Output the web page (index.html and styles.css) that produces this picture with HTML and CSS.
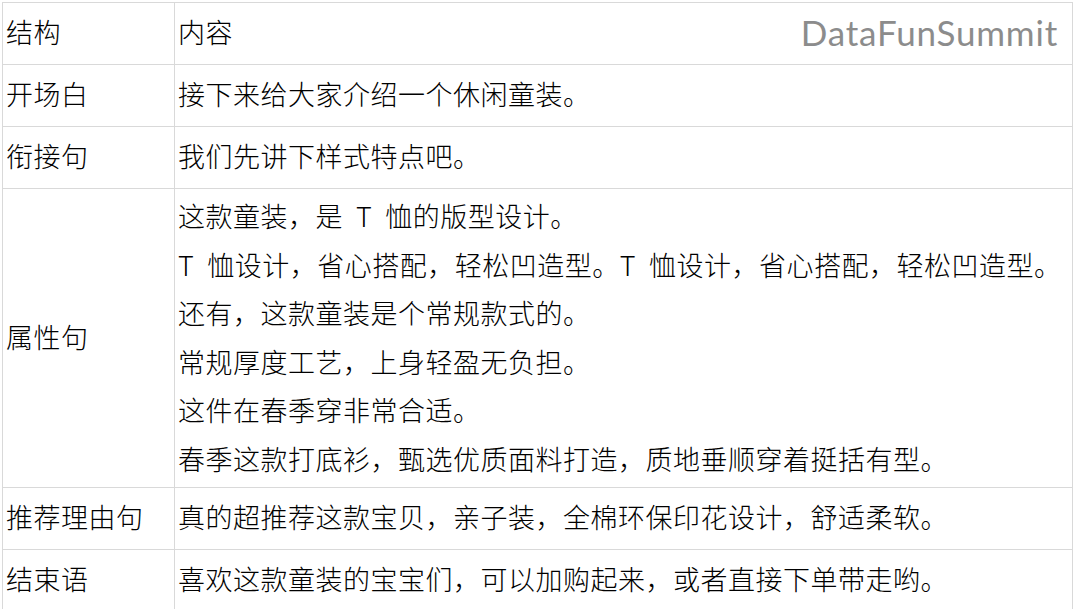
FILE: index.html
```html
<!DOCTYPE html>
<html lang="zh">
<head>
    <meta charset="UTF-8">
    <title>结构</title>
    <link rel="stylesheet" href="styles.css">
</head>
<body>
    <div class="sheet">
        <table class="grid">
            <tr>
                <td class="col-name">结构</td>
                <td>内容</td>
            </tr>
            <tr>
                <td class="col-name">开场白</td>
                <td>接下来给大家介绍一个休闲童装。</td>
            </tr>
            <tr>
                <td class="col-name">衔接句</td>
                <td>我们先讲下样式特点吧。</td>
            </tr>
            <tr>
                <td class="col-name">属性句</td>
                <td class="multi">
                    这款童装，是&nbsp; T&nbsp; 恤的版型设计。<br>
                    T&nbsp; 恤设计，省心搭配，轻松凹造型。T&nbsp; 恤设计，省心搭配，轻松凹造型。<br>
                    还有，这款童装是个常规款式的。<br>
                    常规厚度工艺，上身轻盈无负担。<br>
                    这件在春季穿非常合适。<br>
                    春季这款打底衫，甄选优质面料打造，质地垂顺穿着挺括有型。
                </td>
            </tr>
            <tr>
                <td class="col-name">推荐理由句</td>
                <td>真的超推荐这款宝贝，亲子装，全棉环保印花设计，舒适柔软。</td>
            </tr>
            <tr>
                <td class="col-name">结束语</td>
                <td>喜欢这款童装的宝宝们，可以加购起来，或者直接下单带走哟。</td>
            </tr>
        </table>
        <div class="watermark">DataFunSummit</div>
    </div>
</body>
</html>
```

FILE: styles.css
```css
body {
    margin: 0;
    background: #fff;
    font-family: 'Noto Sans CJK SC', 'Noto Sans', sans-serif;
    color: #000;
    overflow: hidden;
}
.sheet {
    position: relative;
    padding: 2px 0 0 2px;
}
.grid {
    border-collapse: collapse;
    width: 1071px;
    font-size: 27px;
    letter-spacing: 0.5px;
    font-weight: 300;
}
.grid td {
    border: 1px solid #d9d9d9;
    height: 58px;
    padding: 0 3px 3px;
    line-height: 34px;
    vertical-align: middle;
    white-space: nowrap;
}
.grid .col-name {
    width: 165px;
}
.grid .multi {
    padding: 3px 3px 4px;
    line-height: 48.5px;
}
.watermark {
    position: absolute;
    top: 11px;
    right: 16px;
    font-family: 'Lato', sans-serif;
    font-size: 35px;
    letter-spacing: 0.8px;
    color: #8c8c8c;
}
```
